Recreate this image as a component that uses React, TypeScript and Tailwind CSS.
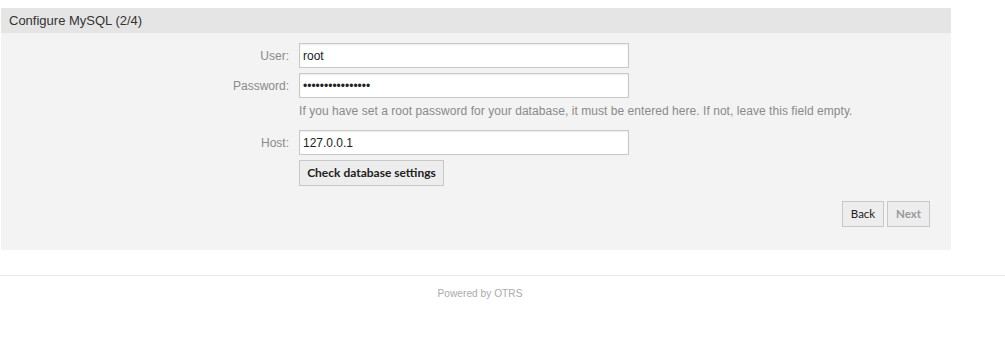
export default function App() {
  const sans = { fontFamily: '"Liberation Sans", Arial, sans-serif' };
  const ubuntu = { fontFamily: 'Lato, "Open Sans", sans-serif' };

  const field = (label: string, value: string, type = 'text') => (
    <div className="flex items-center h-[25px]">
      <label className="w-[288px] text-right text-[12px] text-[#8a8a8a]">{label}</label>
      <input
        type={type}
        defaultValue={value}
        readOnly
        className="ml-[10px] w-[330px] h-[25px] px-[3px] text-[12px] text-[#222] bg-white border border-[#c8c8c8] shadow-[inset_0_1px_2px_rgba(0,0,0,0.08)] outline-none"
        style={sans}
      />
    </div>
  );

  return (
    <div className="w-[1005px] h-[358px] bg-white" style={sans}>
      <div className="pt-[8px] pl-[1px]">
        <div className="w-[950px] bg-[#f3f3f3]">
          <div className="h-[25px] bg-[#e5e5e5] flex items-center pl-[8px] text-[13px] text-[#333]">
            Configure MySQL (2/4)
          </div>
          <div className="pt-[10px] pb-[23px]">
            <div className="flex flex-col gap-[5px]">
              {field('User:', 'root')}
              {field('Password:', 'xxxxxxxxxxxxxxxx', 'password')}
            </div>
            <div className="ml-[298px] mt-[2px] h-[22px] text-[12px] tracking-[0.05px] text-[#8a8a8a] leading-[22px]">
              If you have set a root password for your database, it must be entered here. If not, leave this field empty.
            </div>
            <div className="mt-[8px]">{field('Host:', '127.0.0.1')}</div>
            <div className="ml-[298px] mt-[5px]">
              <button
                className="h-[26px] w-[145px] bg-[#ededed] border border-[#c8c8c8] text-[12px] font-bold text-[#222]"
                style={ubuntu}
              >
                Check database settings
              </button>
            </div>
            <div className="flex justify-end gap-[3px] mt-[15px] pr-[21px]">
              <button
                className="h-[26px] w-[42px] bg-[#ededed] border border-[#c8c8c8] text-[11.5px] text-[#222]"
                style={ubuntu}
              >
                Back
              </button>
              <button
                className="h-[26px] w-[43px] bg-[#ededed] border border-[#c8c8c8] text-[11.5px] font-bold text-[#999]"
                style={ubuntu}
              >
                Next
              </button>
            </div>
          </div>
        </div>
      </div>
      <div className="mt-[25px] border-t border-[#e8e8e8] pt-[10px] text-center text-[10.2px] text-[#aaa] pr-[45px]">
        Powered by OTRS
      </div>
    </div>
  );
}
